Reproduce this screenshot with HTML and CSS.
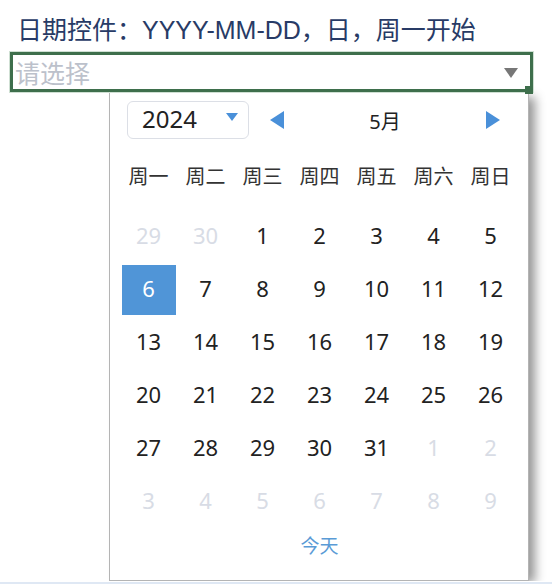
FILE: index.html
```html
<!DOCTYPE html>
<html lang="zh-CN">
<head>
<meta charset="utf-8">
<title>日期控件</title>
<link rel="stylesheet" href="styles.css">
</head>
<body>
<div class="page">
  <h1 class="title">日期控件：YYYY-MM-DD，日，周一开始</h1>
  <div class="field">
    <div class="input">
      <span class="placeholder">请选择</span>
      <span class="caret"></span>
      <span class="corner"></span>
    </div>
    <div class="panel">
      <div class="header">
        <div class="year-select">
          <span class="year">2024</span>
          <span class="year-caret"></span>
        </div>
        <span class="arrow arrow-left"></span>
        <span class="month">5月</span>
        <span class="arrow arrow-right"></span>
      </div>
      <div class="weekdays">
        <span>周一</span><span>周二</span><span>周三</span><span>周四</span><span>周五</span><span>周六</span><span>周日</span>
      </div>
      <div class="days">
        <span class="day muted">29</span><span class="day muted">30</span><span class="day">1</span><span class="day">2</span><span class="day">3</span><span class="day">4</span><span class="day">5</span>
        <span class="day selected">6</span><span class="day">7</span><span class="day">8</span><span class="day">9</span><span class="day">10</span><span class="day">11</span><span class="day">12</span>
        <span class="day">13</span><span class="day">14</span><span class="day">15</span><span class="day">16</span><span class="day">17</span><span class="day">18</span><span class="day">19</span>
        <span class="day">20</span><span class="day">21</span><span class="day">22</span><span class="day">23</span><span class="day">24</span><span class="day">25</span><span class="day">26</span>
        <span class="day">27</span><span class="day">28</span><span class="day">29</span><span class="day">30</span><span class="day">31</span><span class="day muted">1</span><span class="day muted">2</span>
        <span class="day muted">3</span><span class="day muted">4</span><span class="day muted">5</span><span class="day muted">6</span><span class="day muted">7</span><span class="day muted">8</span><span class="day muted">9</span>
      </div>
      <div class="today">今天</div>
    </div>
  </div>
</div>
</body>
</html>
```

FILE: styles.css
```css
html {
  min-height: 100%;
  background: linear-gradient(to top, #dfe8f4 2px, #ffffff 2px);
}

body {
  margin: 0;
  font-family: "Liberation Sans", "Noto Sans CJK SC", sans-serif;
  color: #222;
}

.page {
  padding: 14px 0 0 10px;
}

.title {
  margin: 0 0 6px 0;
  padding-left: 7px;
  font-size: 25px;
  line-height: 32px;
  font-weight: normal;
  color: #283b66;
}

.field {
  width: 523px;
}

.input {
  position: relative;
  box-sizing: border-box;
  height: 40px;
  border: 3px solid #3e6f4c;
  box-shadow: 0 0 0 1px #cfe0d3;
  display: flex;
  align-items: center;
  justify-content: space-between;
  padding: 0 12px 0 2px;
  background: #fff;
}

.placeholder {
  font-family: "Noto Sans CJK SC", sans-serif;
  font-size: 25px;
  line-height: 30px;
  color: #bcc1cb;
}

.caret {
  width: 0;
  height: 0;
  border-left: 7px solid transparent;
  border-right: 7px solid transparent;
  border-top: 10px solid #777;
  margin-top: 2px;
}

.corner {
  position: absolute;
  right: -3px;
  bottom: -5px;
  width: 8px;
  height: 8px;
  background: #3e6f4c;
}

.panel {
  box-sizing: border-box;
  width: 420px;
  height: 490px;
  margin: -1px 0 0 99px;
  background: #fff;
  border: 1px solid #b4b4b4;
  box-shadow: 8px 4px 10px -2px rgba(0, 0, 0, 0.42);
  padding: 9px 9px 0 10px;
}

.header {
  display: flex;
  align-items: center;
  height: 38px;
  padding: 0 19px 0 7px;
}

.year-select {
  box-sizing: border-box;
  width: 122px;
  height: 38px;
  border: 1px solid #dcdfe6;
  border-radius: 6px;
  display: flex;
  align-items: center;
  justify-content: space-between;
  padding: 0 10px 0 14px;
}

.year {
  font-family: "Noto Sans", "Liberation Sans", sans-serif;
  font-size: 24px;
  line-height: 30px;
  margin-bottom: 3px;
  color: #222;
}

.year-caret {
  width: 0;
  height: 0;
  border-left: 6.5px solid transparent;
  border-right: 6.5px solid transparent;
  border-top: 8px solid #4a90d9;
  margin-bottom: 6px;
}

.arrow {
  width: 0;
  height: 0;
  border-top: 9.5px solid transparent;
  border-bottom: 9.5px solid transparent;
}

.arrow-left {
  margin-left: 21px;
  border-right: 14px solid #4a90d9;
}

.arrow-right {
  border-left: 14px solid #4a90d9;
}

.month {
  flex: 1;
  text-align: center;
  font-family: "Noto Sans", "Noto Sans CJK SC", sans-serif;
  font-size: 20px;
  color: #222;
}

.weekdays {
  display: grid;
  grid-template-columns: repeat(7, 57px);
  height: 53px;
  margin-top: 10px;
  align-items: center;
  font-family: "Noto Sans CJK SC", sans-serif;
  font-size: 20px;
  color: #333;
}

.weekdays span {
  text-align: center;
}

.days {
  display: grid;
  grid-template-columns: repeat(7, 57px);
  grid-auto-rows: 53px;
  margin-top: 8px;
}

.day {
  display: flex;
  align-items: center;
  justify-content: center;
  margin: 1.5px;
  padding-bottom: 3px;
  font-family: "Noto Sans", "Liberation Sans", sans-serif;
  font-size: 22px;
  color: #222;
}

.day.muted {
  color: #d8dce5;
}

.day.selected {
  background: #5095d7;
  color: #fff;
}

.today {
  height: 34px;
  line-height: 34px;
  text-align: center;
  font-family: "Noto Sans CJK SC", sans-serif;
  font-size: 19px;
  color: #5a9bd6;
}
```
